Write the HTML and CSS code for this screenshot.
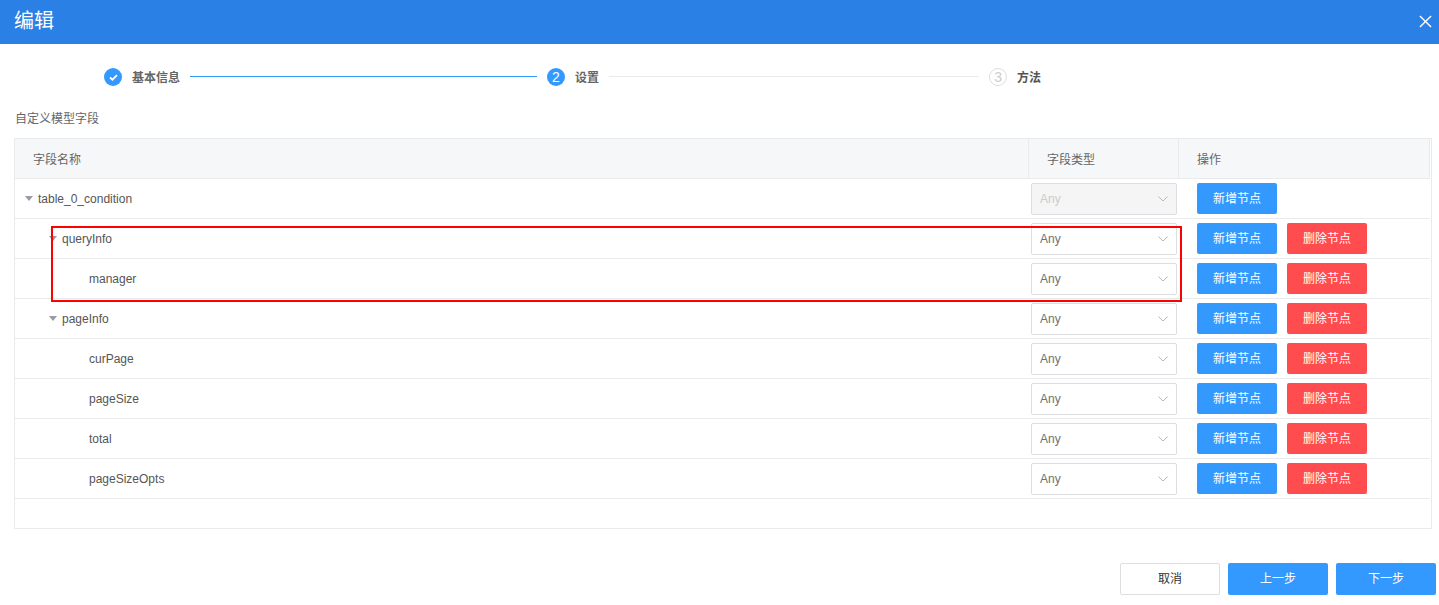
FILE: index.html
```html
<!DOCTYPE html>
<html lang="zh">
<head>
<meta charset="utf-8">
<title>编辑</title>
<link rel="stylesheet" href="styles.css">
</head>
<body>
<header class="head">
  <span class="head-title">编辑</span>
  <svg class="close" viewBox="0 0 14 14" width="13" height="13"><path d="M1 1L13 13M13 1L1 13" stroke="#fff" stroke-width="1.5" fill="none"/></svg>
</header>
<div class="steps">
  <span class="dot dot-on"><svg viewBox="0 0 10 8" width="9" height="7"><path d="M1 4L3.8 6.5L9 1.2" stroke="#fff" stroke-width="2" fill="none"/></svg></span>
  <span class="step-text">基本信息</span>
  <span class="line line-on line-a"></span>
  <span class="dot dot-on">2</span>
  <span class="step-text">设置</span>
  <span class="line line-b"></span>
  <span class="dot dot-off">3</span>
  <span class="step-text step-dark">方法</span>
</div>
<div class="label">自定义模型字段</div>
<div class="table">
  <div class="row row-head">
    <div class="col-name cell-head">字段名称</div>
    <div class="col-type cell-head">字段类型</div>
    <div class="col-op cell-head">操作</div>
  </div>
  <div class="row">
    <div class="col-name lvl0"><i class="tri"></i>table_0_condition</div>
    <div class="col-type"><div class="select select-off"><span>Any</span><svg class="chev" viewBox="0 0 10 6" width="10" height="6"><path d="M0.5 0.5L5 5L9.5 0.5" fill="none" stroke="currentColor"/></svg></div></div>
    <div class="col-op"><button class="btn btn-blue">新增节点</button></div>
  </div>
  <div class="row">
    <div class="col-name lvl1"><i class="tri"></i>queryInfo</div>
    <div class="col-type"><div class="select"><span>Any</span><svg class="chev" viewBox="0 0 10 6" width="10" height="6"><path d="M0.5 0.5L5 5L9.5 0.5" fill="none" stroke="currentColor"/></svg></div></div>
    <div class="col-op"><button class="btn btn-blue">新增节点</button><button class="btn btn-red">删除节点</button></div>
  </div>
  <div class="row">
    <div class="col-name lvl2">manager</div>
    <div class="col-type"><div class="select"><span>Any</span><svg class="chev" viewBox="0 0 10 6" width="10" height="6"><path d="M0.5 0.5L5 5L9.5 0.5" fill="none" stroke="currentColor"/></svg></div></div>
    <div class="col-op"><button class="btn btn-blue">新增节点</button><button class="btn btn-red">删除节点</button></div>
  </div>
  <div class="row">
    <div class="col-name lvl1"><i class="tri"></i>pageInfo</div>
    <div class="col-type"><div class="select"><span>Any</span><svg class="chev" viewBox="0 0 10 6" width="10" height="6"><path d="M0.5 0.5L5 5L9.5 0.5" fill="none" stroke="currentColor"/></svg></div></div>
    <div class="col-op"><button class="btn btn-blue">新增节点</button><button class="btn btn-red">删除节点</button></div>
  </div>
  <div class="row">
    <div class="col-name lvl2">curPage</div>
    <div class="col-type"><div class="select"><span>Any</span><svg class="chev" viewBox="0 0 10 6" width="10" height="6"><path d="M0.5 0.5L5 5L9.5 0.5" fill="none" stroke="currentColor"/></svg></div></div>
    <div class="col-op"><button class="btn btn-blue">新增节点</button><button class="btn btn-red">删除节点</button></div>
  </div>
  <div class="row">
    <div class="col-name lvl2">pageSize</div>
    <div class="col-type"><div class="select"><span>Any</span><svg class="chev" viewBox="0 0 10 6" width="10" height="6"><path d="M0.5 0.5L5 5L9.5 0.5" fill="none" stroke="currentColor"/></svg></div></div>
    <div class="col-op"><button class="btn btn-blue">新增节点</button><button class="btn btn-red">删除节点</button></div>
  </div>
  <div class="row">
    <div class="col-name lvl2">total</div>
    <div class="col-type"><div class="select"><span>Any</span><svg class="chev" viewBox="0 0 10 6" width="10" height="6"><path d="M0.5 0.5L5 5L9.5 0.5" fill="none" stroke="currentColor"/></svg></div></div>
    <div class="col-op"><button class="btn btn-blue">新增节点</button><button class="btn btn-red">删除节点</button></div>
  </div>
  <div class="row">
    <div class="col-name lvl2">pageSizeOpts</div>
    <div class="col-type"><div class="select"><span>Any</span><svg class="chev" viewBox="0 0 10 6" width="10" height="6"><path d="M0.5 0.5L5 5L9.5 0.5" fill="none" stroke="currentColor"/></svg></div></div>
    <div class="col-op"><button class="btn btn-blue">新增节点</button><button class="btn btn-red">删除节点</button></div>
  </div>
</div>
<div class="foot">
  <button class="fbtn fbtn-plain">取消</button>
  <button class="fbtn fbtn-blue">上一步</button>
  <button class="fbtn fbtn-blue">下一步</button>
</div>
<div class="highlight"></div>
</body>
</html>
```
FILE: styles.css
```css
* { box-sizing: border-box; }
html, body { margin: 0; padding: 0; height: 605px; overflow: hidden; background: #fff; }
body { font-family: "Liberation Sans", "Noto Sans CJK SC", sans-serif; font-size: 12px; color: #515a6e; position: relative; }

.head { height: 44px; background: #2a80e4; display: flex; align-items: center; justify-content: space-between; padding: 0 7px 2px 14px; }
.head-title { font-size: 20px; color: #fff; line-height: 24px; }
.close { display: block; }

.steps { display: flex; align-items: center; height: 18px; margin-top: 24px; padding-left: 104px; }
.dot { width: 18px; height: 18px; border-radius: 50%; display: flex; align-items: center; justify-content: center; flex: none; font-size: 14px; }
.dot-on { background: #3399ff; color: #fff; }
.dot-off { border: 1px solid #dcdee2; color: #ccc; }
.step-text { margin-left: 10px; margin-bottom: 2px; font-weight: bold; color: #666; }
.step-dark { color: #555; }
.line { height: 1px; margin: 0 10px 2px; background: #e8eaec; flex: none; }
.line-on { background: #3399ff; }
.line-a { width: 347px; }
.line-b { width: 370px; }

.label { margin: 25px 0 0 15px; line-height: 16px; color: #666; }

.table { margin: 11px 0 0 14px; width: 1418px; height: 391px; border: 1px solid #e8eaec; }
.row { display: flex; height: 40px; width: 1415px; border-bottom: 1px solid #e8eaec; color: #555; }
.row-head { background: #f5f7f9; color: #666; }
.col-name { width: 1014px; display: flex; align-items: center; }
.col-type { width: 150px; padding: 4px 0 0 2px; }
.col-op { width: 251px; display: flex; gap: 10px; padding: 4px 0 0 18px; align-items: flex-start; }
.cell-head { padding: 0 0 1px 18px; display: flex; align-items: center; border-right: 1px solid #e8eaec; }

.lvl0 { padding-left: 10px; }
.lvl1 { padding-left: 34px; }
.lvl2 { padding-left: 74px; }
.tri { width: 0; height: 0; margin-right: 5px; border-left: 4px solid transparent; border-right: 4px solid transparent; border-top: 5px solid #999ba5; }

.select { width: 146px; height: 32px; border: 1px solid #dcdee2; border-radius: 2px; background: #fff; display: flex; align-items: center; justify-content: space-between; padding: 0 8px 0 8px; color: #707070; }
.select-off { background: #f5f5f5; color: #ccc; }
.chev { color: #b4b7be; }

.btn { width: 80px; height: 31px; border: 0; border-radius: 2px; padding: 0 0 2px; color: #fff; font: inherit; }
.btn-blue { background: #3399ff; }
.btn-red { background: #ff4d4f; }

.foot { display: flex; justify-content: flex-end; gap: 8px; margin-top: 34px; padding-right: 3px; }
.fbtn { width: 100px; height: 32px; border-radius: 2px; border: 0; padding: 0 0 4px; font: inherit; }
.fbtn-plain { background: #fff; border: 1px solid #dcdee2; color: #333; }
.fbtn-blue { background: #3399ff; color: #fff; }

.highlight { position: absolute; left: 51px; top: 226px; width: 1131px; height: 76px; border: 2px solid #f00; }
```
